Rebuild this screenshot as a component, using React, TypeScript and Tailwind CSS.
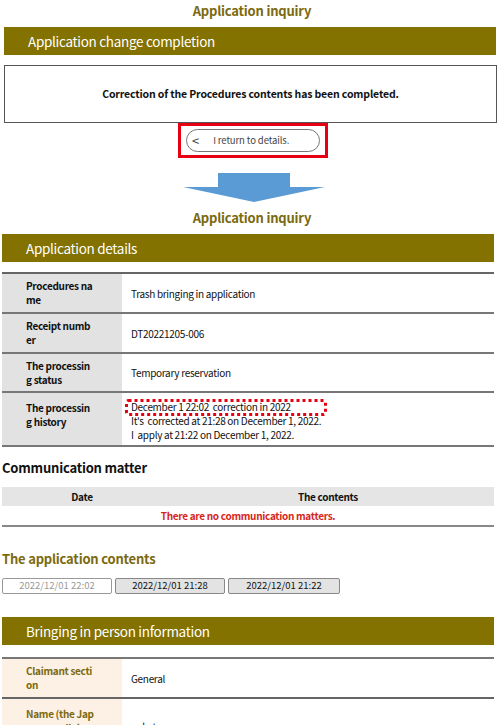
import React from "react";

const OLIVE = "bg-[#847200]";

function Bar({ title }: { title: string }) {
  return (
    <div className={`${OLIVE} flex h-[28px] items-center pl-[24px] text-[13.5px] tracking-[-0.3px] text-white`}>{title}</div>
  );
}

type Row = { label: string; value: React.ReactNode; h: string };

const details: Row[] = [
  { label: "Procedures name", value: "Trash bringing in application", h: "h-[40px]" },
  { label: "Receipt number", value: "DT20221205-006", h: "h-[40px]" },
  { label: "The processing status", value: "Temporary reservation", h: "h-[39px]" },
];

const label = "w-[120px] shrink-0 pl-[24px] pr-[27px] font-bold leading-[14px] break-all";

export default function App() {
  return (
    <div className="w-[504px] overflow-hidden bg-white pb-10 text-[#111] [font-family:'Noto_Sans_CJK_JP','Noto_Sans',sans-serif]">
      <h1 className="pt-[2px] text-center text-[13px] font-bold leading-[18px] tracking-[-0.2px] text-[#7b6a10]">Application inquiry</h1>

      <div className="ml-[4px] mr-[8px] mt-[7px]">
        <Bar title="Application change completion" />
      </div>

      <div className="ml-[4px] mr-[7px] mt-[10px] flex h-[58px] items-center justify-center border border-[#555] text-[10.5px] font-bold tracking-[-0.15px]">
        Correction of the Procedures contents has been completed.
      </div>

      <div className="flex justify-center">
        <div className="ml-[2px] border-[3px] border-[#e60012] px-[5px] py-[3px]">
          <button className="flex h-[23px] w-[134px] items-center rounded-full border border-[#777] bg-white pl-[5px] text-[9.5px] tracking-[-0.1px] text-[#444]">
            <span className="text-[13px] leading-none">&lt;</span>
            <span className="ml-[14px]">I return to details.</span>
          </button>
        </div>
      </div>

      <div className="mt-[15px] flex justify-center">
        <svg width="144" height="30" viewBox="0 0 144 30" className="ml-[6px]">
          <polygon points="35,0 107,0 107,14 142,14 71,29 0,14 35,14" fill="#5b9bd5" />
        </svg>
      </div>

      <h2 className="mt-[6px] text-center text-[13px] font-bold leading-[18px] tracking-[-0.2px] text-[#7b6a10]">Application inquiry</h2>

      <div className="ml-[2px] mr-[10px] mt-[7px]">
        <Bar title="Application details" />
      </div>

      <div className="ml-[2px] mr-[10px] mt-[10px] border-t-2 border-[#666] text-[10px] tracking-[-0.3px]">
        {details.map((r) => (
          <div key={r.label} className={`flex ${r.h} border-b-2 border-[#777]`}>
            <div className={`${label} flex items-center bg-[#e2e2e2]`}>{r.label}</div>
            <div className="flex items-center pl-[9px]">{r.value}</div>
          </div>
        ))}
        <div className="flex h-[54px] border-b-2 border-[#777]">
          <div className={`${label} bg-[#e2e2e2] pt-[8px]`}>The processing history</div>
          <div className="pl-[9px] pt-[7px] leading-[14px]">
            <div className="relative">
              December 1 22:02&nbsp; correction in 2022
              <svg className="absolute -left-[6px] -top-[1px]" width="202" height="17" viewBox="0 0 202 17">
                <rect x="1.5" y="1.5" width="199" height="14" rx="2" fill="none" stroke="#e60012" strokeWidth="3" strokeDasharray="3 3" />
              </svg>
            </div>
            <div>It's&nbsp; corrected at 21:28 on December 1, 2022.</div>
            <div>I&nbsp; apply at 21:22 on December 1, 2022.</div>
          </div>
        </div>
      </div>

      <h3 className="ml-[2px] mt-[11px] text-[13px] font-bold leading-[20px] tracking-[-0.2px]">Communication matter</h3>

      <div className="ml-[2px] mr-[10px] mt-[9px] border-b-2 border-[#888] text-[10px] tracking-[-0.3px]">
        <div className="flex h-[19px] items-center bg-[#e5e5e5] font-bold">
          <div className="w-[160px] text-center">Date</div>
          <div className="flex-1 text-center">The contents</div>
        </div>
        <div className="flex h-[19px] items-center justify-center font-bold text-[#d8261c]">
          There are no communication matters.
        </div>
      </div>

      <h3 className="ml-[2px] mt-[22px] text-[13px] font-bold leading-[20px] tracking-[-0.2px] text-[#7b6a10]">The application contents</h3>

      <div className="ml-[2px] mt-[9px] flex gap-[3px] text-[9.5px]">
        <button className="h-[16px] w-[110px] rounded-[2px] border border-[#999] bg-white leading-none text-[#999]">2022/12/01 22:02</button>
        <button className="h-[16px] w-[110px] rounded-[2px] border border-[#888] bg-[#e3e3e3] leading-none text-[#111]">2022/12/01 21:28</button>
        <button className="h-[16px] w-[112px] rounded-[2px] border border-[#888] bg-[#e3e3e3] leading-none text-[#111]">2022/12/01 21:22</button>
      </div>

      <div className="ml-[2px] mr-[10px] mt-[23px]">
        <Bar title="Bringing in person information" />
      </div>

      <div className="ml-[2px] mr-[10px] mt-[12px] border-t-2 border-[#777] text-[10px] tracking-[-0.3px]">
        <div className="flex h-[40px] border-b-2 border-[#666]">
          <div className={`${label} flex items-center bg-[#fdf0e4] text-[#7b6a10]`}>Claimant section</div>
          <div className="flex items-center pl-[9px]">General</div>
        </div>
        <div className="flex h-[54px]">
          <div className={`${label} bg-[#fdf0e4] pt-[8px] text-[#7b6a10]`}>Name (the Japanese syllabary)</div>
          <div className="flex items-center pl-[9px]">nakata</div>
        </div>
      </div>
    </div>
  );
}
